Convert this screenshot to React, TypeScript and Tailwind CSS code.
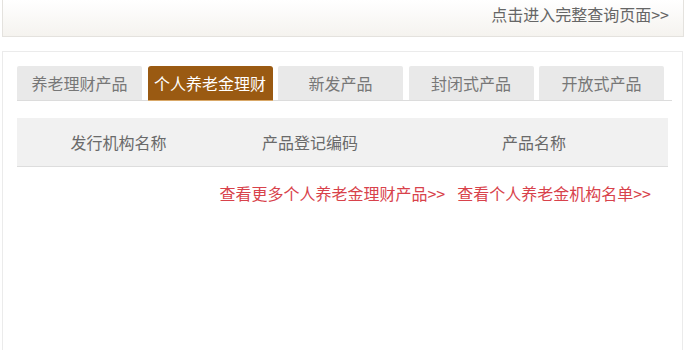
import React from "react";

const tabs = ["养老理财产品", "个人养老金理财", "新发产品", "封闭式产品", "开放式产品"];

export default function App() {
  return (
    <div
      className="w-[700px] h-[350px] bg-white overflow-hidden"
      style={{ fontFamily: '"Noto Sans CJK SC", "Noto Sans", sans-serif' }}
    >
      <div className="ml-[2px] w-[682px] h-[37px] border border-t-0 border-[#e4e2de] bg-gradient-to-b from-white to-[#f5f3ef] flex justify-end items-start pr-[14px] pt-[3px]">
        <span className="text-[16px] leading-[22px] text-[#666]">点击进入完整查询页面&gt;&gt;</span>
      </div>

      <div className="mt-[14px] ml-[2px] w-[681px] h-[320px] border border-[#ebebeb] pl-[14px] pt-[14px]">
        <div className="w-[655px] flex gap-[5.5px] border-b border-[#dcdcdc]">
          {tabs.map((t, i) => (
            <div
              key={t}
              className={
                i === 1
                  ? "w-[125px] h-[34px] flex items-center justify-center rounded-t-[3px] bg-[#9a5a12] text-white text-[16px] shadow-[0_1px_0_#d9a868]"
                  : "w-[125px] h-[34px] flex items-center justify-center rounded-t-[2px] bg-[#e9e9e9] text-[#777] text-[16px]"
              }
            >
              {t}
            </div>
          ))}
        </div>

        <div className="mt-[17px] w-[651px] h-[49px] bg-[#f1f1f1] border-b border-[#dddddd] flex items-center text-[16px] text-[#6a6a6a]">
          <div className="w-[203px] text-center">发行机构名称</div>
          <div className="w-[180px] text-center">产品登记编码</div>
          <div className="flex-1 text-center">产品名称</div>
        </div>

        <div className="mt-[15px] w-[634px] flex justify-end gap-[12px] text-[16px] leading-[22px] text-[#d8424b]">
          <span>查看更多个人养老金理财产品&gt;&gt;</span>
          <span>查看个人养老金机构名单&gt;&gt;</span>
        </div>
      </div>
    </div>
  );
}
